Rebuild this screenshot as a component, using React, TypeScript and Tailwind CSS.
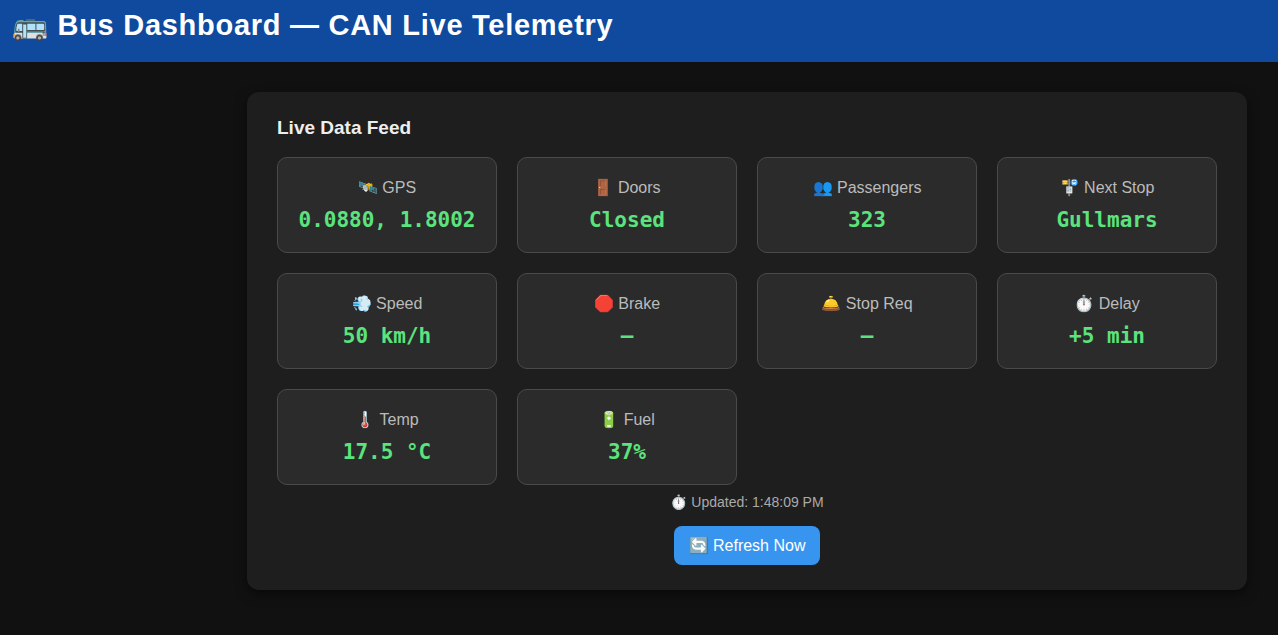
type Reading = { icon: string; label: string; value: string };

const readings: Reading[] = [
  { icon: "🛰️", label: "GPS", value: "0.0880, 1.8002" },
  { icon: "🚪", label: "Doors", value: "Closed" },
  { icon: "👥", label: "Passengers", value: "323" },
  { icon: "🚏", label: "Next Stop", value: "Gullmars" },
  { icon: "💨", label: "Speed", value: "50 km/h" },
  { icon: "🛑", label: "Brake", value: "—" },
  { icon: "🛎️", label: "Stop Req", value: "—" },
  { icon: "⏱️", label: "Delay", value: "+5 min" },
  { icon: "🌡️", label: "Temp", value: "17.5 °C" },
  { icon: "🔋", label: "Fuel", value: "37%" },
];

function ReadingCard({ icon, label, value }: Reading) {
  return (
    <div className="rounded-[10px] border border-[#4a4a4a] bg-[#2b2b2b] px-4 pt-5 pb-[18px] text-center">
      <dt className="text-base leading-5 text-[#bbbbbb]">
        {icon} {label}
      </dt>
      <dd className="mt-2 font-['DejaVu_Sans_Mono',monospace] text-[21px] leading-7 font-bold whitespace-nowrap text-[#5be37d]">
        {value}
      </dd>
    </div>
  );
}

export default function App() {
  return (
    <div className="min-h-screen bg-[#111111] font-['Liberation_Sans',Arial,sans-serif] text-[#eeeeee]">
      <header className="bg-[#0f4a9e] px-3 pt-2 pb-5">
        <h1 className="text-[29px] leading-[34px] font-bold tracking-wide text-white">
          🚌 Bus Dashboard — CAN Live Telemetry
        </h1>
      </header>
      <main className="flex justify-end px-[31px] py-[30px]">
        <section className="w-full max-w-[1000px] rounded-xl bg-[#1e1e1e] px-[30px] py-[25px] shadow-[0_4px_12px_rgba(0,0,0,0.5)]">
          <h2 className="text-[19px] leading-[22px] font-bold">Live Data Feed</h2>
          <dl className="mt-[18px] grid grid-cols-2 gap-5 md:grid-cols-4">
            {readings.map((reading) => (
              <ReadingCard key={reading.label} {...reading} />
            ))}
          </dl>
          <div className="mt-[7px] flex flex-col items-center gap-3.5">
            <p className="text-sm leading-5 text-[#aaaaaa]">⏱️ Updated: 1:48:09 PM</p>
            <button type="button" className="rounded-lg bg-[#3794ef] px-[15px] py-2.5 text-base leading-[19px] text-white">
              🔄 Refresh Now
            </button>
          </div>
        </section>
      </main>
    </div>
  );
}
